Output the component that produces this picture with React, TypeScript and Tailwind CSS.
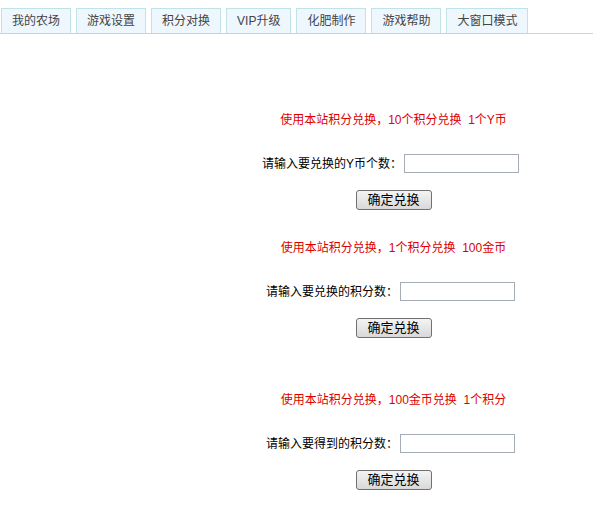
import { FC } from "react";

const tabs = ["我的农场", "游戏设置", "积分对换", "VIP升级", "化肥制作", "游戏帮助", "大窗口模式"];

const font = { fontFamily: '"Liberation Sans", "Noto Sans CJK SC", sans-serif' };

type ExchangeProps = {
  note: string;
  label: string;
  top: string;
};

const Exchange: FC<ExchangeProps> = ({ note, label, top }) => {
  return (
    <div className={`flex flex-col items-center ${top}`}>
      <p className="text-[12px] leading-[16px] h-[16px] text-[#dd0000] whitespace-pre">{note}</p>
      <div className="mt-[26px] flex items-center h-[19px] pr-[6px]">
        <span className="text-[12px] leading-[16px] text-black">{label}</span>
        <input
          type="text"
          className="ml-[2px] w-[115px] h-[19px] border border-[#a5acb5] bg-white outline-none"
        />
      </div>
      <button className="mt-[17px] w-[76px] h-[20px] border border-[#707070] rounded-[3px] bg-gradient-to-b from-[#f4f4f4] to-[#d9d9d9] text-[13px] leading-[18px] text-black">
        确定兑换
      </button>
    </div>
  );
};

export default function App() {
  return (
    <div className="w-[593px] h-[530px] bg-white" style={font}>
      <ul className="flex gap-[5px] pt-[8px] pl-[1px] border-b border-[#b2dde4]">
        {tabs.map((tab) => (
          <li
            key={tab}
            className="h-[25px] px-[10px] flex items-center border-x border-t border-[#c0e3ea] bg-[#eef7fd] text-[12px] text-[#444]"
          >
            {tab}
          </li>
        ))}
      </ul>
      <div className="pl-[194px]">
        <Exchange
          top="mt-[78px]"
          note="使用本站积分兑换，10个积分兑换  1个Y币"
          label="请输入要兑换的Y币个数："
        />
        <Exchange
          top="mt-[30px]"
          note="使用本站积分兑换，1个积分兑换  100金币"
          label="请输入要兑换的积分数："
        />
        <Exchange
          top="mt-[54px]"
          note="使用本站积分兑换，100金币兑换  1个积分"
          label="请输入要得到的积分数："
        />
      </div>
    </div>
  );
}
